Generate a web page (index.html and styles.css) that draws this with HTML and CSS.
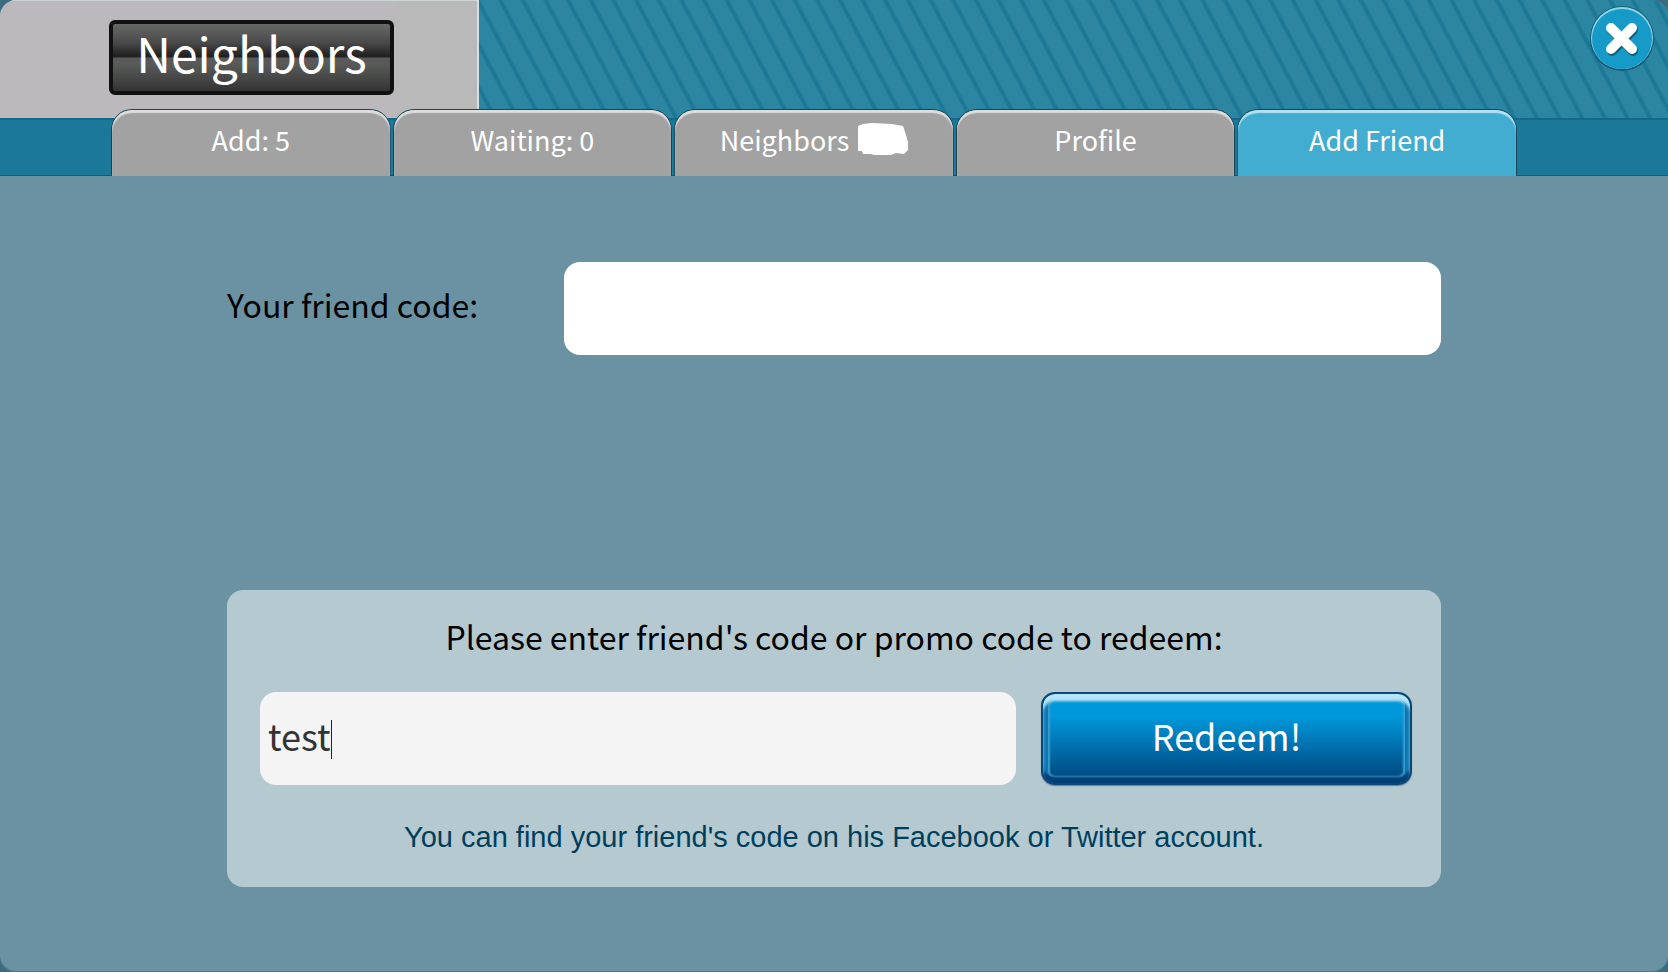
FILE: index.html
```html
<!DOCTYPE html>
<html lang="en">
<head>
    <meta charset="UTF-8">
    <meta name="viewport" content="width=device-width, initial-scale=1.0">
    <title>Neighbors</title>
    <link rel="stylesheet" href="styles.css">
</head>
<body>
    <div class="window">
        <header class="header">
            <div class="title-area">
                <h1 class="title">Neighbors</h1>
            </div>
            <button class="close" type="button" aria-label="Close">
                <svg viewBox="0 0 66 66" width="66" height="66">
                    <circle cx="33" cy="34" r="32" fill="#0d4c66" opacity="0.7"/>
                    <circle cx="33" cy="33" r="32" fill="#15617c"/>
                    <circle cx="33" cy="33" r="31" fill="#8fd3e8"/>
                    <circle cx="33" cy="34" r="30" fill="#169bc9"/>
                    <path d="M23 25 L44 46 M44 25 L23 46" stroke="#0d5d7c" stroke-width="10" stroke-linecap="round"/>
                    <path d="M22 23 L43 44 M43 23 L22 44" stroke="#fff" stroke-width="10" stroke-linecap="round"/>
                </svg>
            </button>
        </header>

        <nav class="tabs">
            <button class="tab" type="button">Add: 5</button>
            <button class="tab" type="button">Waiting: 0</button>
            <button class="tab" type="button">
                Neighbors
                <svg class="blob" viewBox="0 0 50 32" width="50" height="32" aria-hidden="true">
                    <path d="M0 3 L5 1 L14 0 L34 1 L45 3 L48 12 L50 19 L50 27 L46 31 L38 30 L33 32 L16 32 L13 31 L5 31 L4 28 L0 28 Z" fill="#fff"/>
                </svg>
            </button>
            <button class="tab" type="button">Profile</button>
            <button class="tab active" type="button">Add Friend</button>
        </nav>

        <main class="content">
            <div class="friend-code">
                <label class="own-label" for="ownCode">Your friend code:</label>
                <input class="field own" id="ownCode" type="text" readonly>
            </div>

            <form class="redeem-box">
                <label class="redeem-label" for="redeemCode">Please enter friend's code or promo code to redeem:</label>
                <div class="redeem-row">
                    <input class="field code" id="redeemCode" type="text" value="test">
                    <button class="redeem-btn" type="button">Redeem!</button>
                </div>
                <p class="hint">You can find your friend's code on his Facebook or Twitter account.</p>
            </form>
        </main>
    </div>
</body>
</html>
```
FILE: styles.css
```css
* {
    box-sizing: border-box;
}

body {
    margin: 0;
    background: #3d6b80;
    font-family: "Noto Sans CJK SC", "Noto Sans", sans-serif;
}

button,
input {
    font-family: inherit;
    border: none;
    margin: 0;
}

button {
    cursor: pointer;
}

.window {
    min-height: 100vh;
    display: flex;
    flex-direction: column;
    border-radius: 16px;
    overflow: hidden;
    background: #6b92a3;
    box-shadow: inset 0 -1px 0 #52798b;
}

.header {
    display: flex;
    justify-content: space-between;
    height: 118px;
    background: repeating-linear-gradient(62deg, #2c86a1 0, #2c86a1 14px, #1b7897 16px, #1b7897 18px, #2c86a1 20px);
}

.title-area {
    width: 479px;
    padding: 20px 0 0 109px;
    border-right: 2px solid #d5e0e2;
    background: linear-gradient(90deg, #bbb9bc 395px, #b9b9b9 396px);
    box-shadow: inset 0 1px 0 #cdd3d5;
}

.title {
    width: 285px;
    height: 75px;
    margin: 0;
    border: 4px solid #111;
    border-radius: 6px;
    background: linear-gradient(#676967 0, #494949 28%, #222 47%, #222 49%, #5a5a5a 51%, #575957 62%, #343434 100%);
    color: #fff;
    font-size: 48px;
    font-weight: 400;
    line-height: 56px;
    text-align: center;
}

.close {
    width: 66px;
    height: 66px;
    margin: 5px 13px 0 0;
    padding: 0;
    background: none;
}

.close svg {
    display: block;
}

.tabs {
    display: grid;
    grid-template-columns: repeat(5, 1fr);
    gap: 4px;
    height: 58px;
    padding: 0 152px 0 112px;
    background: #1b7899;
    box-shadow: inset 0 2px 0 #15688a, inset 0 -1px 0 #115f7d;
}

.tab {
    height: 66px;
    margin-top: -8px;
    padding: 0 0 8px;
    display: flex;
    justify-content: center;
    align-items: center;
    gap: 9px;
    border-radius: 20px 20px 0 0;
    background: #a2a2a2;
    box-shadow: 0 0 0 1px #1d4353, inset 0 3px 1px #dedede;
    clip-path: inset(-1px -1px 0 -1px);
    color: #fff;
    font-size: 27px;
}

.tab.active {
    background: #43add1;
    box-shadow: 0 0 0 1px #16485c, inset 0 3px 1px #b5e0ef;
}

.content {
    flex: 1;
    display: flex;
    flex-direction: column;
    justify-content: space-between;
    padding: 86px 227px 85px;
    font-size: 32px;
    color: #000;
}

.friend-code {
    display: grid;
    grid-template-columns: 337px 1fr;
    align-items: center;
}

.own-label {
    padding-bottom: 10px;
}

.field {
    min-width: 0;
    height: 93px;
    border-radius: 16px;
    outline: none;
}

.own {
    background: #fff;
}

.redeem-box {
    height: 297px;
    padding-top: 22px;
    border-radius: 16px;
    background: #b5c9d0;
}

.redeem-label {
    display: block;
    line-height: 48px;
    text-align: center;
}

.redeem-row {
    display: flex;
    gap: 25px;
    margin-top: 32px;
    padding: 0 29px 0 33px;
}

/* text cursor is drawn as a thin line right after the value */
.code {
    flex: 1;
    padding: 0 8px 8px;
    background: linear-gradient(#222, #222) 71px 28px / 1px 39px no-repeat #f4f4f4;
    caret-color: transparent;
    color: #333;
    font-size: 36px;
}

.redeem-btn {
    width: 371px;
    height: 93px;
    padding: 0 0 8px;
    border: 2px solid #0b4777;
    border-radius: 14px;
    background: linear-gradient(#0098da 0, #0098da 25%, #0075b4 55%, #004d84 90%, #003d72 100%);
    box-shadow: inset 0 7px 3px #b4e5f8, inset 0 -6px 2px #003f76, inset 0 0 0 5px #0b78b5, inset 0 0 2px 7px #3b9dce, 0 1px 1px #5e8294;
    color: #fff;
    font-size: 36px;
}

.hint {
    margin: 34px 0 0;
    color: #003f5c;
    font-family: "Liberation Sans", Arial, sans-serif;
    font-size: 29px;
    line-height: 36px;
    text-align: center;
}
```
